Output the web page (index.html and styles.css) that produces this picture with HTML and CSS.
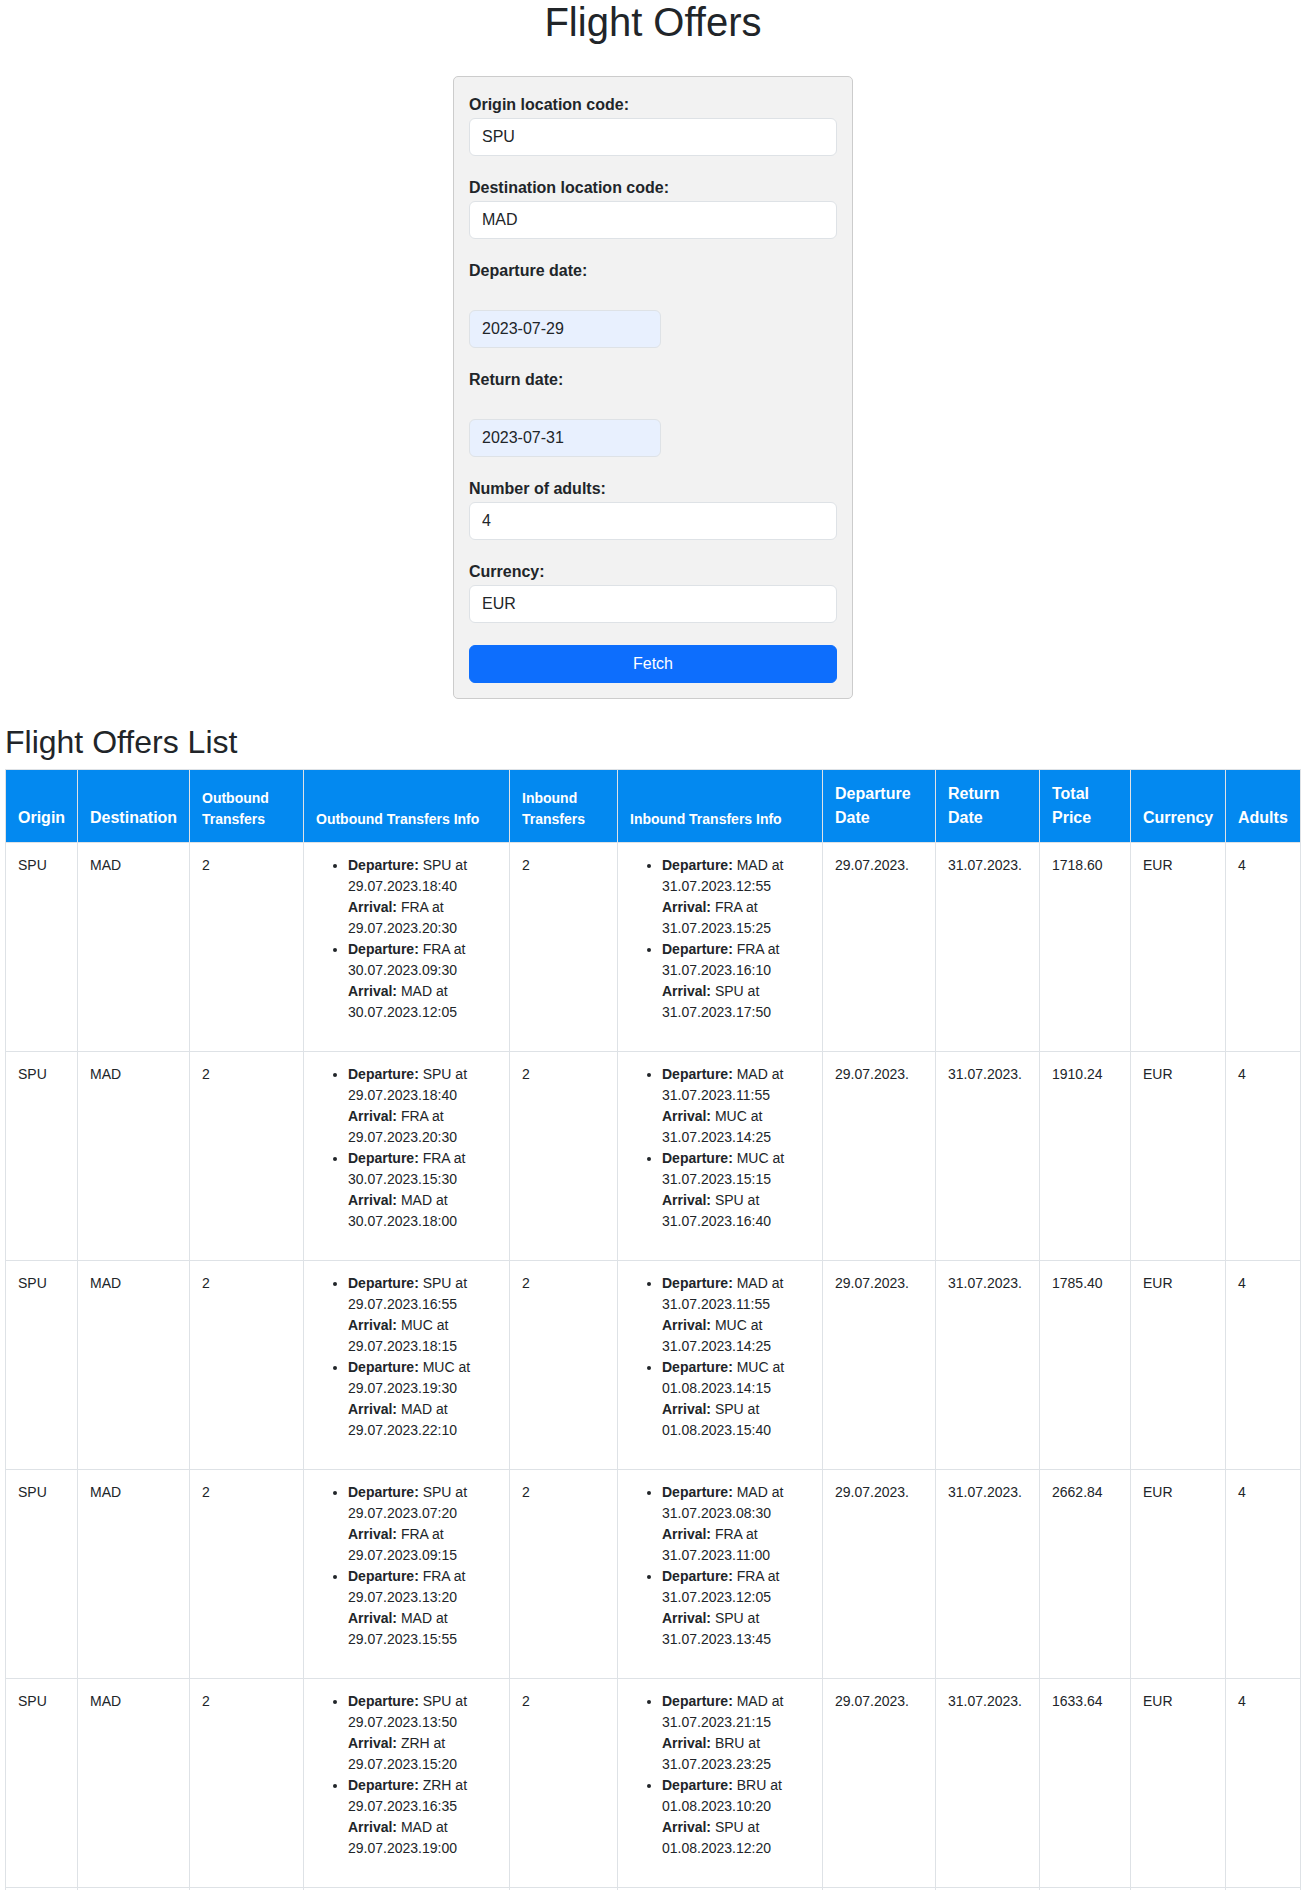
FILE: index.html
```html
<!DOCTYPE html>
<html lang="en">
<head>
<meta charset="utf-8">
<title>Flight Offers</title>
<link rel="stylesheet" href="styles.css">
</head>
<body>
<h1 class="page-title">Flight Offers</h1>
<form class="search-box">
  <div class="group">
    <label class="field-label">Origin location code:</label>
    <input class="field" type="text" value="SPU">
  </div>
  <div class="group">
    <label class="field-label">Destination location code:</label>
    <input class="field" type="text" value="MAD">
  </div>
  <div class="group">
    <label class="field-label">Departure date:</label>
    <input class="field date" type="text" value="2023-07-29">
  </div>
  <div class="group">
    <label class="field-label">Return date:</label>
    <input class="field date" type="text" value="2023-07-31">
  </div>
  <div class="group">
    <label class="field-label">Number of adults:</label>
    <input class="field" type="text" value="4">
  </div>
  <div class="group">
    <label class="field-label">Currency:</label>
    <input class="field" type="text" value="EUR">
  </div>
  <button class="fetch" type="button">Fetch</button>
</form>

<h2 class="list-title">Flight Offers List</h2>
<table class="offers">
  <colgroup>
    <col class="c-origin"><col class="c-dest"><col class="c-otr"><col class="c-oinfo"><col class="c-itr"><col class="c-iinfo"><col class="c-dep"><col class="c-ret"><col class="c-price"><col class="c-cur"><col class="c-adults">
  </colgroup>
  <thead>
    <tr>
      <th>Origin</th>
      <th>Destination</th>
      <th class="small">Outbound Transfers</th>
      <th class="small">Outbound Transfers Info</th>
      <th class="small">Inbound Transfers</th>
      <th class="small">Inbound Transfers Info</th>
      <th>Departure Date</th>
      <th>Return Date</th>
      <th>Total Price</th>
      <th>Currency</th>
      <th>Adults</th>
    </tr>
  </thead>
  <tbody>
    <tr>
      <td>SPU</td><td>MAD</td><td>2</td>
      <td><ul class="legs">
        <li><strong>Departure:</strong> SPU at 29.07.2023.18:40<br><strong>Arrival:</strong> FRA at 29.07.2023.20:30</li>
        <li><strong>Departure:</strong> FRA at 30.07.2023.09:30<br><strong>Arrival:</strong> MAD at 30.07.2023.12:05</li>
      </ul></td>
      <td>2</td>
      <td><ul class="legs">
        <li><strong>Departure:</strong> MAD at 31.07.2023.12:55<br><strong>Arrival:</strong> FRA at 31.07.2023.15:25</li>
        <li><strong>Departure:</strong> FRA at 31.07.2023.16:10<br><strong>Arrival:</strong> SPU at 31.07.2023.17:50</li>
      </ul></td>
      <td>29.07.2023.</td><td>31.07.2023.</td><td>1718.60</td><td>EUR</td><td>4</td>
    </tr>
    <tr>
      <td>SPU</td><td>MAD</td><td>2</td>
      <td><ul class="legs">
        <li><strong>Departure:</strong> SPU at 29.07.2023.18:40<br><strong>Arrival:</strong> FRA at 29.07.2023.20:30</li>
        <li><strong>Departure:</strong> FRA at 30.07.2023.15:30<br><strong>Arrival:</strong> MAD at 30.07.2023.18:00</li>
      </ul></td>
      <td>2</td>
      <td><ul class="legs">
        <li><strong>Departure:</strong> MAD at 31.07.2023.11:55<br><strong>Arrival:</strong> MUC at 31.07.2023.14:25</li>
        <li><strong>Departure:</strong> MUC at 31.07.2023.15:15<br><strong>Arrival:</strong> SPU at 31.07.2023.16:40</li>
      </ul></td>
      <td>29.07.2023.</td><td>31.07.2023.</td><td>1910.24</td><td>EUR</td><td>4</td>
    </tr>
    <tr>
      <td>SPU</td><td>MAD</td><td>2</td>
      <td><ul class="legs">
        <li><strong>Departure:</strong> SPU at 29.07.2023.16:55<br><strong>Arrival:</strong> MUC at 29.07.2023.18:15</li>
        <li><strong>Departure:</strong> MUC at 29.07.2023.19:30<br><strong>Arrival:</strong> MAD at 29.07.2023.22:10</li>
      </ul></td>
      <td>2</td>
      <td><ul class="legs">
        <li><strong>Departure:</strong> MAD at 31.07.2023.11:55<br><strong>Arrival:</strong> MUC at 31.07.2023.14:25</li>
        <li><strong>Departure:</strong> MUC at 01.08.2023.14:15<br><strong>Arrival:</strong> SPU at 01.08.2023.15:40</li>
      </ul></td>
      <td>29.07.2023.</td><td>31.07.2023.</td><td>1785.40</td><td>EUR</td><td>4</td>
    </tr>
    <tr>
      <td>SPU</td><td>MAD</td><td>2</td>
      <td><ul class="legs">
        <li><strong>Departure:</strong> SPU at 29.07.2023.07:20<br><strong>Arrival:</strong> FRA at 29.07.2023.09:15</li>
        <li><strong>Departure:</strong> FRA at 29.07.2023.13:20<br><strong>Arrival:</strong> MAD at 29.07.2023.15:55</li>
      </ul></td>
      <td>2</td>
      <td><ul class="legs">
        <li><strong>Departure:</strong> MAD at 31.07.2023.08:30<br><strong>Arrival:</strong> FRA at 31.07.2023.11:00</li>
        <li><strong>Departure:</strong> FRA at 31.07.2023.12:05<br><strong>Arrival:</strong> SPU at 31.07.2023.13:45</li>
      </ul></td>
      <td>29.07.2023.</td><td>31.07.2023.</td><td>2662.84</td><td>EUR</td><td>4</td>
    </tr>
    <tr>
      <td>SPU</td><td>MAD</td><td>2</td>
      <td><ul class="legs">
        <li><strong>Departure:</strong> SPU at 29.07.2023.13:50<br><strong>Arrival:</strong> ZRH at 29.07.2023.15:20</li>
        <li><strong>Departure:</strong> ZRH at 29.07.2023.16:35<br><strong>Arrival:</strong> MAD at 29.07.2023.19:00</li>
      </ul></td>
      <td>2</td>
      <td><ul class="legs">
        <li><strong>Departure:</strong> MAD at 31.07.2023.21:15<br><strong>Arrival:</strong> BRU at 31.07.2023.23:25</li>
        <li><strong>Departure:</strong> BRU at 01.08.2023.10:20<br><strong>Arrival:</strong> SPU at 01.08.2023.12:20</li>
      </ul></td>
      <td>29.07.2023.</td><td>31.07.2023.</td><td>1633.64</td><td>EUR</td><td>4</td>
    </tr>
    <tr>
      <td>SPU</td><td>MAD</td><td>2</td>
      <td><ul class="legs">
        <li><strong>Departure:</strong> SPU at 29.07.2023.18:40<br><strong>Arrival:</strong> FRA at 29.07.2023.20:30</li>
        <li><strong>Departure:</strong> FRA at 30.07.2023.09:30<br><strong>Arrival:</strong> MAD at 30.07.2023.12:05</li>
      </ul></td>
      <td>2</td>
      <td><ul class="legs">
        <li><strong>Departure:</strong> MAD at 31.07.2023.11:55<br><strong>Arrival:</strong> MUC at 31.07.2023.14:25</li>
        <li><strong>Departure:</strong> MUC at 31.07.2023.15:15<br><strong>Arrival:</strong> SPU at 31.07.2023.16:40</li>
      </ul></td>
      <td>29.07.2023.</td><td>31.07.2023.</td><td>1945.12</td><td>EUR</td><td>4</td>
    </tr>
  </tbody>
</table>
</body>
</html>
```

FILE: styles.css
```css
* { box-sizing: border-box; }

body {
  margin: 0;
  padding: 0 5px;
  font-family: "Liberation Sans", Arial, Helvetica, sans-serif;
  font-size: 16px;
  line-height: 1.5;
  color: #212529;
  background: #ffffff;
}

.page-title {
  margin: 0 0 32px;
  font-size: 40px;
  font-weight: 400;
  line-height: 44px;
  text-align: center;
}

.search-box {
  width: 400px;
  margin: 0 auto;
  padding: 16px 15px 15px;
  background: #f2f2f2;
  border: 1px solid #cccccc;
  border-radius: 5px;
}

.group {
  margin-bottom: 20px;
}

.field-label {
  display: block;
  margin-bottom: 1px;
  font-weight: 700;
  line-height: 24px;
}

.field {
  display: block;
  width: 100%;
  height: 38px;
  padding: 6px 12px;
  font-family: inherit;
  font-size: 16px;
  line-height: 24px;
  color: #212529;
  background: #ffffff;
  border: 1px solid #dee2e6;
  border-radius: 6px;
}

.field.date {
  width: 192px;
  margin-top: 27px;
  background: #e8f0fe;
}

.fetch {
  display: block;
  width: 100%;
  height: 38px;
  margin-top: 22px;
  padding: 6px 12px;
  font-family: inherit;
  font-size: 16px;
  line-height: 24px;
  color: #ffffff;
  background: #0d6efd;
  border: 1px solid #0d6efd;
  border-radius: 6px;
}

.list-title {
  margin: 24px 0 8px;
  font-size: 32px;
  font-weight: 400;
  line-height: 38px;
}

.offers {
  width: 1295px;
  table-layout: fixed;
  border-collapse: collapse;
  font-size: 14px;
  line-height: 21px;
}

.c-origin { width: 72px; }
.c-dest { width: 112px; }
.c-otr { width: 114px; }
.c-oinfo { width: 206px; }
.c-itr { width: 108px; }
.c-iinfo { width: 205px; }
.c-dep { width: 113px; }
.c-ret { width: 104px; }
.c-price { width: 91px; }
.c-cur { width: 95px; }
.c-adults { width: 75px; }

.offers th {
  padding: 12px;
  font-size: 16px;
  line-height: 24px;
  font-weight: 700;
  text-align: left;
  vertical-align: bottom;
  color: #ffffff;
  background: #0389f0;
  border: 1px solid #dee2e6;
}

.offers th.small {
  font-size: 14px;
  line-height: 21px;
}

.offers td {
  padding: 12px;
  vertical-align: top;
  border: 1px solid #dee2e6;
}

.legs {
  margin: 0 0 16px;
  padding-left: 32px;
}
```
